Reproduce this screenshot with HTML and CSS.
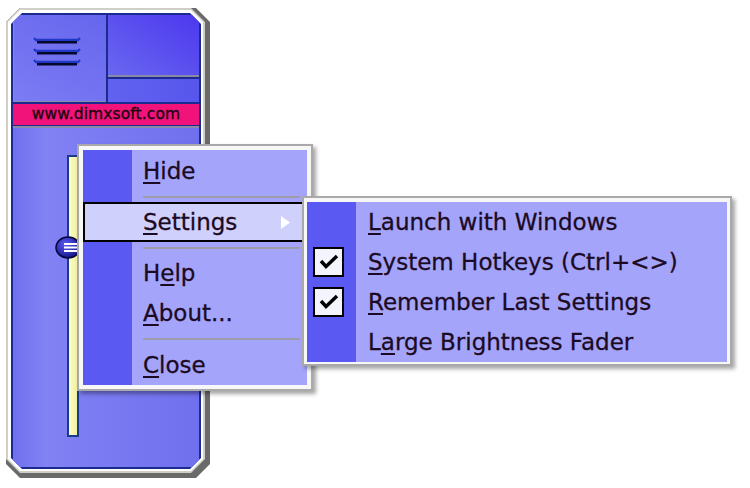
FILE: index.html
```html
<!DOCTYPE html>
<html>
<head>
<meta charset="utf-8">
<link rel="stylesheet" href="styles.css">
</head>
<body>
<div class="stage">
  <div class="frame">
    <div class="ring-light">
      <div class="ring-white">
        <div class="ring-navy">
          <div class="top">
            <div class="cell-main">
              <svg class="burger" width="48" height="30" viewBox="0 0 48 30">
                <g>
                  <path d="M1 1 L3 3 H45 L47 1" fill="none" stroke="#2038c8" stroke-width="2.4"/>
                  <rect x="4" y="4" width="40" height="2.5" fill="#06082a"/>
                </g>
                <g transform="translate(0 11)">
                  <path d="M1 1 L3 3 H45 L47 1" fill="none" stroke="#2038c8" stroke-width="2.4"/>
                  <rect x="4" y="4" width="40" height="2.5" fill="#06082a"/>
                </g>
                <g transform="translate(0 22)">
                  <path d="M1 1 L3 3 H45 L47 1" fill="none" stroke="#2038c8" stroke-width="2.4"/>
                  <rect x="4" y="4" width="40" height="2.5" fill="#06082a"/>
                </g>
              </svg>
            </div>
            <div class="cell-side">
              <div class="cell-a"></div>
              <div class="cell-b"></div>
            </div>
          </div>
          <div class="url">www.dimxsoft.com</div>
          <div class="body">
            <div class="track">
              <div class="knob">
                <svg width="26" height="23" viewBox="0 0 26 23">
                  <defs>
                    <radialGradient id="kg" cx="40%" cy="35%" r="65%">
                      <stop offset="0" stop-color="#5c5cf8"/>
                      <stop offset="1" stop-color="#16168c"/>
                    </radialGradient>
                  </defs>
                  <ellipse cx="13" cy="11.5" rx="12" ry="10.5" fill="url(#kg)" stroke="#06063a" stroke-width="1.5"/>
                  <rect x="9" y="7" width="14" height="2" fill="#ffffff"/>
                  <rect x="9" y="10.5" width="14" height="2" fill="#ffffff"/>
                  <rect x="9" y="14" width="14" height="2" fill="#ffffff"/>
                </svg>
              </div>
            </div>
          </div>
        </div>
      </div>
    </div>
  </div>

  <div class="menu main-menu">
    <div class="menu-inner">
      <div class="item item-first"><span><u>H</u>ide</span></div>
      <div class="sep sep-a"></div>
      <div class="item item-active">
        <span><u>S</u>ettings</span>
        <svg class="arrow" width="9" height="13" viewBox="0 0 9 13"><polygon points="0,0 9,6.5 0,13" fill="#ffffff"/></svg>
      </div>
      <div class="sep sep-b"></div>
      <div class="item"><span>H<u>e</u>lp</span></div>
      <div class="item"><span><u>A</u>bout...</span></div>
      <div class="sep sep-c"></div>
      <div class="item"><span><u>C</u>lose</span></div>
    </div>
  </div>

  <div class="menu sub-menu">
    <div class="menu-inner sub-inner">
      <div class="sub-item">
        <div class="gut"></div>
        <span><u>L</u>aunch with Windows</span>
      </div>
      <div class="sub-item">
        <div class="gut">
          <div class="check">
            <svg width="27" height="26" viewBox="0 0 27 26"><polyline points="6,12 11,17.5 22,7" fill="none" stroke="#000000" stroke-width="3.4"/></svg>
          </div>
        </div>
        <span><u>S</u>ystem Hotkeys (Ctrl+&lt;&gt;)</span>
      </div>
      <div class="sub-item">
        <div class="gut">
          <div class="check">
            <svg width="27" height="26" viewBox="0 0 27 26"><polyline points="6,12 11,17.5 22,7" fill="none" stroke="#000000" stroke-width="3.4"/></svg>
          </div>
        </div>
        <span><u>R</u>emember Last Settings</span>
      </div>
      <div class="sub-item">
        <div class="gut"></div>
        <span>L<u>a</u>rge Brightness Fader</span>
      </div>
    </div>
  </div>
</div>
</body>
</html>
```

FILE: styles.css
```css
html, body {
  margin: 0;
  padding: 0;
  background: #ffffff;
}

.stage {
  position: relative;
  width: 750px;
  height: 488px;
  overflow: hidden;
  font-family: "DejaVu Sans", Verdana, sans-serif;
}

.frame,
.ring-light,
.ring-white,
.ring-navy {
  --cut: 14px;
  clip-path: polygon(var(--cut) 0, calc(100% - var(--cut)) 0, 100% var(--cut), 100% calc(100% - var(--cut)), calc(100% - var(--cut)) 100%, var(--cut) 100%, 0 calc(100% - var(--cut)), 0 var(--cut));
  box-sizing: border-box;
}

.frame {
  margin: 8px 0 0 6px;
  width: 204px;
  height: 470px;
  background: #6a6a6a;
  padding: 0 5px 5px 0;
}

.ring-light {
  height: 100%;
  background: #cfcfc8;
  padding: 2px;
  --cut: 14px;
}

.ring-white {
  height: 100%;
  background: #ffffff;
  padding: 3px 2px 2px 3px;
  --cut: 12px;
}

.ring-navy {
  height: 100%;
  background: #1a2a8e;
  padding: 2px;
  --cut: 11px;
  display: flex;
  flex-direction: column;
}

.top {
  display: flex;
  gap: 2px;
  height: 87px;
}

.cell-main {
  width: 93px;
  background: linear-gradient(30deg, #7c7cf4, #6666ee);
  box-shadow: inset 1px 0 0 #8c8ca8, inset 0 -1px 0 #8c8ca8;
  padding: 22px 0 0 20px;
  box-sizing: border-box;
}

.burger {
  display: block;
}

.cell-side {
  flex: 1;
  display: flex;
  flex-direction: column;
  gap: 2px;
}

.cell-a {
  height: 62px;
  background: linear-gradient(35deg, #6a68f0, #4c38ee);
  box-shadow: inset 0 -2px 0 #8888a8;
}

.cell-b {
  flex: 1;
  background: linear-gradient(90deg, #6262f0, #5656ec);
}

.url {
  margin-top: 2px;
  height: 21px;
  background: #f2137a;
  color: #1c0410;
  font-size: 15.5px;
  line-height: 21px;
  text-align: center;
  letter-spacing: 0.1px;
  -webkit-text-stroke: 0.35px #1c0410;
}

.body {
  flex: 1;
  margin-top: 1px;
  border-top: 2px solid #8a8aa6;
  background: linear-gradient(90deg, #7070ee 0, #8282f4 18%, #7a7af2 50%, #7070ee 100%);
  padding: 27px 0 0 54px;
}

.track {
  position: relative;
  width: 12px;
  height: 282px;
  box-sizing: border-box;
  border: 2px solid #1c3a8c;
  background: linear-gradient(90deg, #fbfbd2, #f2f29c);
}

.knob {
  position: absolute;
  left: -14px;
  top: 79px;
  width: 26px;
  height: 23px;
}

.knob svg {
  display: block;
}

/* Menus (pop-up overlays) */
.menu {
  position: absolute;
  border: 2px solid #a9a9a9;
  background: #f7f7f7;
  box-shadow: 3px 3px 4px rgba(0, 0, 0, 0.35);
}

.main-menu {
  left: 77px;
  top: 144px;
  padding: 4px;
}

.menu-inner {
  width: 224px;
  background: linear-gradient(90deg, #5a5af2 49px, #a4a4fb 49px);
  color: #1b0a22;
  font-size: 23px;
  -webkit-text-stroke: 0.3px #1b0a22;
}

.item {
  height: 40px;
  display: flex;
  align-items: center;
  padding-left: 60px;
  box-sizing: border-box;
}

.item-first {
  height: 42px;
}

.item-active {
  border: 2px solid #000000;
  background: #d0d0fd;
  padding-left: 58px;
  padding-right: 15px;
}

.arrow {
  margin-left: auto;
  display: block;
}

u {
  text-decoration-thickness: 2px;
  text-underline-offset: 3px;
}

.sep {
  display: flex;
  align-items: center;
  padding: 0 7px 0 60px;
}

.sep::after {
  content: "";
  flex: 1;
  height: 2px;
  background: #9e9eaa;
}

.sep-a { height: 10px; }
.sep-b { height: 11px; }
.sep-c { height: 12px; }

.sub-menu {
  left: 302px;
  top: 196px;
  padding: 4px 3px 2px 3px;
}

.sub-inner {
  width: 420px;
}

.sub-item {
  height: 40px;
  display: flex;
  align-items: center;
}

.gut {
  width: 49px;
  height: 100%;
  display: flex;
  align-items: center;
  padding-left: 6px;
  box-sizing: border-box;
  margin-right: 12px;
}

.check {
  width: 31px;
  height: 30px;
  box-sizing: border-box;
  border: 2px solid #000000;
  background: #f4f4fd;
}

.check svg {
  display: block;
}
```
